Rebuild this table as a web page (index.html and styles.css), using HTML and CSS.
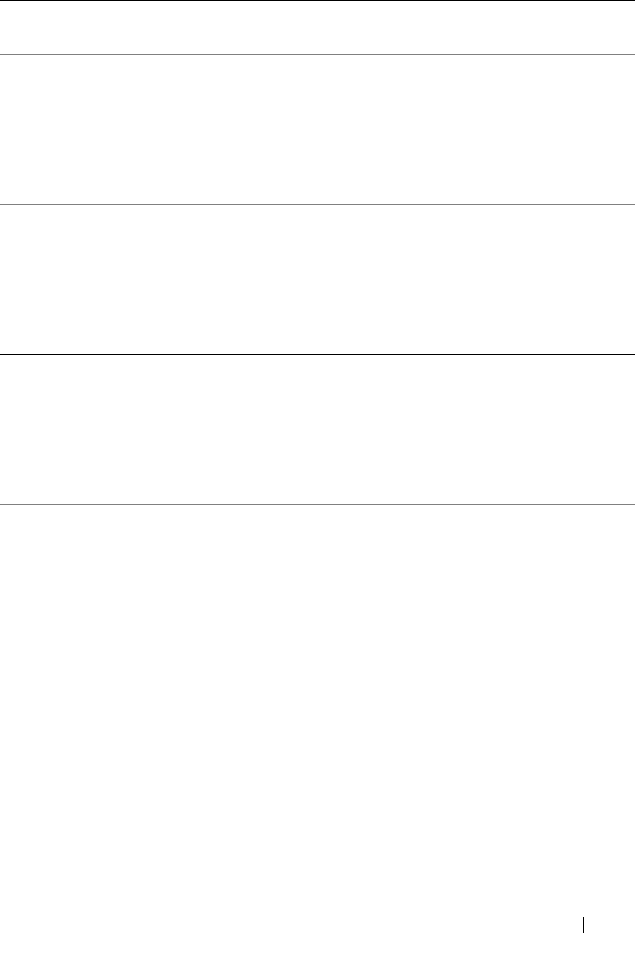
FILE: index.html
```html
<!DOCTYPE html>
<html>
<head>
<meta charset="utf-8">
<link rel="stylesheet" href="styles.css">
</head>
<body>
<div class="page">
  <div class="table">
    <div class="row row-head rule-black"></div>
    <div class="row rule-gray"></div>
    <div class="row rule-gray"></div>
    <div class="row rule-black"></div>
    <div class="row-end rule-gray"></div>
  </div>
  <footer class="footer">
    <span class="sep"></span>
  </footer>
</div>
</body>
</html>
```

FILE: styles.css
```css
html, body {
  margin: 0;
  padding: 0;
  background: #ffffff;
  font-family: "Liberation Sans", Arial, sans-serif;
}
.page {
  width: 641px;
  height: 955px;
  display: flex;
  flex-direction: column;
}
.table {
  width: 635px;
  display: flex;
  flex-direction: column;
}
.row {
  box-sizing: border-box;
  height: 150px;
}
.row-head {
  height: 54px;
}
.row-end {
  height: 0;
}
.rule-black {
  border-top: 1px solid #000000;
}
.rule-gray {
  border-top: 1px solid #808080;
}
.footer {
  display: flex;
  justify-content: flex-end;
  margin-top: 412px;
  padding-right: 57px;
}
.sep {
  display: block;
  width: 1px;
  height: 16px;
  background: #000000;
}
```
